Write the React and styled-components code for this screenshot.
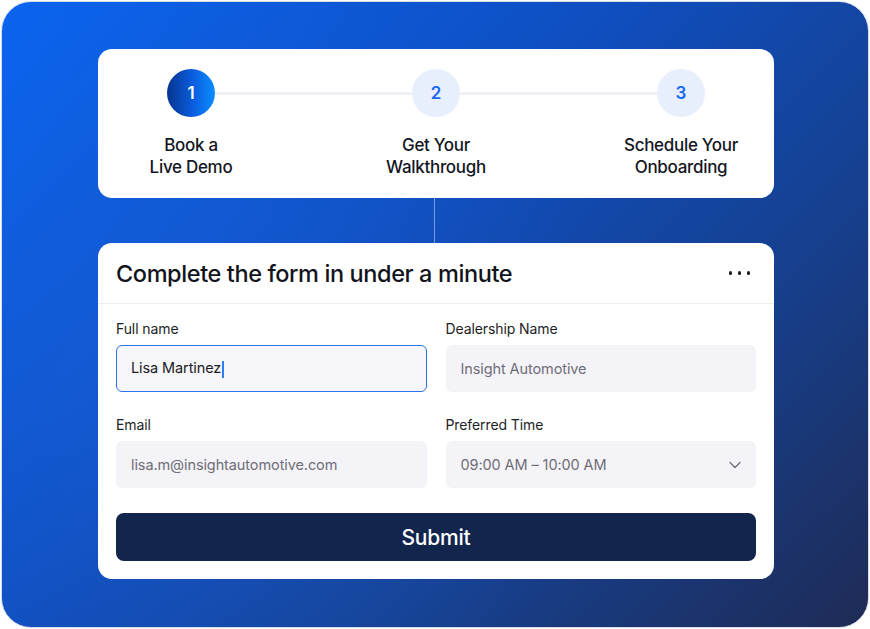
import React from "react";
import styled, { createGlobalStyle } from "styled-components";

const GlobalStyle = createGlobalStyle`
  html, body {
    margin: 0;
    padding: 0;
    background: #ffffff;
  }
  body {
    font-family: Inter, "Noto Sans", "Liberation Sans", sans-serif;
    -webkit-font-smoothing: antialiased;
  }
`;

const Page = styled.div`
  width: 870px;
  height: 629px;
  padding: 1px;
  box-sizing: border-box;
`;

const Frame = styled.div`
  width: 100%;
  height: 100%;
  box-sizing: border-box;
  border-radius: 30px;
  border: 1px solid #d6dbe6;
  background:
    radial-gradient(circle at 20% 60%, rgba(40, 110, 230, 0.25), transparent 55%),
    linear-gradient(135deg, #0a64f0 0%, #0f4fc2 40%, #16408f 70%, #1f2b55 100%);
  padding: 47px 94px 48px 96px;
  display: flex;
  flex-direction: column;
`;

const Card = styled.div`
  background: #ffffff;
  border-radius: 14px;
`;

const StepsCard = styled(Card)`
  padding: 20px 23px 20px;
`;

const StepsRow = styled.div`
  position: relative;
  display: flex;
  justify-content: space-between;
`;

const Track = styled.div`
  position: absolute;
  left: 70px;
  right: 70px;
  top: 23px;
  height: 3px;
  background: #f1f1f5;
  border-radius: 2px;
`;

const Step = styled.div`
  position: relative;
  width: 140px;
  display: flex;
  flex-direction: column;
  align-items: center;
  gap: 17px;
`;

const Circle = styled.div`
  width: 48px;
  height: 48px;
  border-radius: 50%;
  display: flex;
  align-items: center;
  justify-content: center;
  font-size: 17px;
  font-weight: 600;
  color: ${(p) => (p.$active ? "#ffffff" : "#1768f2")};
  background: ${(p) =>
    p.$active
      ? "linear-gradient(90deg, #06348f 0%, #0a5ee0 55%, #0a8dff 100%)"
      : "#e8effc"};
`;

const StepLabel = styled.div`
  font-size: 17px;
  font-weight: 500;
  line-height: 22px;
  color: #14161f;
  text-align: center;
  letter-spacing: -0.3px;
  white-space: nowrap;
`;

const Connector = styled.div`
  width: 1px;
  height: 45px;
  margin-left: 336px;
  background: rgba(255, 255, 255, 0.45);
`;

const FormCard = styled(Card)`
  display: flex;
  flex-direction: column;
`;

const FormHeader = styled.div`
  height: 60px;
  padding: 0 24px 0 18px;
  display: flex;
  align-items: center;
  justify-content: space-between;
  border-bottom: 1px solid #efeff3;
`;

const Title = styled.h1`
  margin: 0;
  font-size: 23.5px;
  font-weight: 500;
  color: #12141c;
  letter-spacing: -0.4px;
`;

const Dots = styled.div`
  display: flex;
  gap: 5.5px;
  span {
    width: 3.5px;
    height: 3.5px;
    border-radius: 50%;
    background: #16181f;
  }
`;

const FormBody = styled.div`
  padding: 15px 18px 18px;
`;

const Grid = styled.div`
  display: grid;
  grid-template-columns: 1fr 1fr;
  column-gap: 19px;
  row-gap: 23px;
`;

const Field = styled.div`
  display: flex;
  flex-direction: column;
  gap: 6px;
`;

const Label = styled.label`
  font-size: 14px;
  line-height: 20px;
  color: #1c1e26;
  letter-spacing: -0.1px;
`;

const InputBox = styled.div`
  height: 47px;
  box-sizing: border-box;
  border-radius: 6px;
  background: ${(p) => (p.$focused ? "#f7f6fa" : "#f4f3f7")};
  border: ${(p) => (p.$focused ? "1.5px solid #2c72e6" : "1.5px solid transparent")};
  padding: 0 14px;
  display: flex;
  align-items: center;
  justify-content: space-between;
  font-size: 14.5px;
  color: ${(p) => (p.$focused ? "#1a1b22" : "#6e6e78")};
  letter-spacing: -0.1px;
`;

const Caret = styled.span`
  display: inline-block;
  width: 1.5px;
  height: 17px;
  margin-left: 1px;
  vertical-align: middle;
  background: #2f7cf0;
`;

const SubmitButton = styled.button`
  margin-top: 25px;
  width: 100%;
  height: 48px;
  border: none;
  border-radius: 8px;
  background: #12254d;
  color: #ffffff;
  font-family: inherit;
  font-size: 21px;
  font-weight: 500;
  letter-spacing: -0.2px;
  cursor: pointer;
`;

const steps = [
  { n: 1, lines: ["Book a", "Live Demo"], active: true },
  { n: 2, lines: ["Get Your", "Walkthrough"] },
  { n: 3, lines: ["Schedule Your", "Onboarding"] },
];

const Chevron = () => (
  <svg width="12" height="8" viewBox="0 0 12 8" fill="none">
    <path d="M1 1.5l5 5 5-5" stroke="#6a6a73" strokeWidth="1.2" strokeLinecap="round" strokeLinejoin="round" />
  </svg>
);

export default function App() {
  return (
    <>
      <GlobalStyle />
      <Page>
        <Frame>
          <StepsCard>
            <StepsRow>
              <Track />
              {steps.map((s) => (
                <Step key={s.n}>
                  <Circle $active={s.active}>{s.n}</Circle>
                  <StepLabel>
                    {s.lines[0]}
                    <br />
                    {s.lines[1]}
                  </StepLabel>
                </Step>
              ))}
            </StepsRow>
          </StepsCard>
          <Connector />
          <FormCard>
            <FormHeader>
              <Title>Complete the form in under a minute</Title>
              <Dots>
                <span />
                <span />
                <span />
              </Dots>
            </FormHeader>
            <FormBody>
              <Grid>
                <Field>
                  <Label>Full name</Label>
                  <InputBox $focused>
                    <span>
                      Lisa Martinez
                      <Caret />
                    </span>
                  </InputBox>
                </Field>
                <Field>
                  <Label>Dealership Name</Label>
                  <InputBox>Insight Automotive</InputBox>
                </Field>
                <Field>
                  <Label>Email</Label>
                  <InputBox>lisa.m@insightautomotive.com</InputBox>
                </Field>
                <Field>
                  <Label>Preferred Time</Label>
                  <InputBox>
                    <span>09:00 AM – 10:00 AM</span>
                    <Chevron />
                  </InputBox>
                </Field>
              </Grid>
              <SubmitButton>Submit</SubmitButton>
            </FormBody>
          </FormCard>
        </Frame>
      </Page>
    </>
  );
}
